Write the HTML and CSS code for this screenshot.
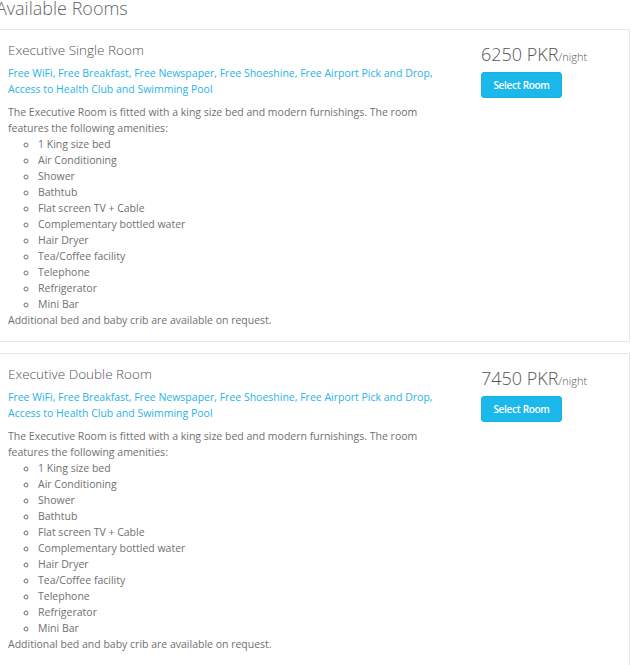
FILE: index.html
```html
<!DOCTYPE html>
<html>
<head>
<meta charset="utf-8">
<link rel="stylesheet" href="styles.css">
</head>
<body>
<div class="page">
  <h2 class="page-title">Available Rooms</h2>

  <div class="room">
    <div class="room-info">
      <h3 class="room-name">Executive Single Room</h3>
      <p class="room-perks">Free WiFi, Free Breakfast, Free Newspaper, Free Shoeshine, Free Airport Pick and Drop, Access to Health Club and Swimming Pool</p>
      <div class="room-desc">
        The Executive Room is fitted with a king size bed and modern furnishings. The room features the following amenities:
        <ul class="amenities">
          <li>1 King size bed</li>
          <li>Air Conditioning</li>
          <li>Shower</li>
          <li>Bathtub</li>
          <li>Flat screen TV + Cable</li>
          <li>Complementary bottled water</li>
          <li>Hair Dryer</li>
          <li>Tea/Coffee facility</li>
          <li>Telephone</li>
          <li>Refrigerator</li>
          <li>Mini Bar</li>
        </ul>
        Additional bed and baby crib are available on request.
      </div>
    </div>
    <div class="room-book">
      <div class="price">6250 PKR<span class="per">/night</span></div>
      <button class="select-btn">Select Room</button>
    </div>
  </div>

  <div class="room">
    <div class="room-info">
      <h3 class="room-name">Executive Double Room</h3>
      <p class="room-perks">Free WiFi, Free Breakfast, Free Newspaper, Free Shoeshine, Free Airport Pick and Drop, Access to Health Club and Swimming Pool</p>
      <div class="room-desc">
        The Executive Room is fitted with a king size bed and modern furnishings. The room features the following amenities:
        <ul class="amenities">
          <li>1 King size bed</li>
          <li>Air Conditioning</li>
          <li>Shower</li>
          <li>Bathtub</li>
          <li>Flat screen TV + Cable</li>
          <li>Complementary bottled water</li>
          <li>Hair Dryer</li>
          <li>Tea/Coffee facility</li>
          <li>Telephone</li>
          <li>Refrigerator</li>
          <li>Mini Bar</li>
        </ul>
        Additional bed and baby crib are available on request.
      </div>
    </div>
    <div class="room-book">
      <div class="price">7450 PKR<span class="per">/night</span></div>
      <button class="select-btn">Select Room</button>
    </div>
  </div>
</div>
</body>
</html>
```

FILE: styles.css
```css
html, body {
  margin: 0;
  padding: 0;
  background: #fff;
  overflow: hidden;
}
body {
  font-family: "Open Sans", "Liberation Sans", sans-serif;
  color: #666;
}
.page {
  width: 631px;
  margin-left: -1px;
}
.page-title {
  margin: -5px 0 0 -3px;
  font-size: 18px;
  font-weight: 300;
  color: #666;
  line-height: 26px;
  height: 34px;
}
.room {
  display: grid;
  grid-template-columns: 450px 1fr;
  column-gap: 23px;
  border: 1px solid #e6e6e6;
  padding: 8px 8px 13px 8px;
  margin-bottom: 11px;
}
.room-name {
  margin: 0 0 3px 0;
  font-size: 13.5px;
  font-weight: 300;
  color: #555;
  line-height: 24px;
}
.room-perks {
  margin: 0 0 7px 0;
  font-size: 10.5px;
  line-height: 16px;
  color: #27b3e6;
}
.room-desc {
  font-size: 10.5px;
  line-height: 16px;
  color: #707070;
}
.amenities {
  margin: 0;
  padding-left: 30px;
  list-style: circle;
}
.room-book {
  padding-top: 4px;
}
.price {
  font-size: 18px;
  font-weight: 300;
  color: #555;
  line-height: 24px;
}
.per {
  font-size: 11px;
}
.select-btn {
  margin-top: 3px;
  background: #1ab8eb;
  color: #fff;
  border: 1px solid #19b0e2;
  border-radius: 3px;
  font-family: "Open Sans", "Liberation Sans", sans-serif;
  font-size: 10px;
  font-weight: 600;
  letter-spacing: -0.3px;
  padding: 0 8px;
  height: 26px;
  width: 81px;
  cursor: pointer;
}
```
